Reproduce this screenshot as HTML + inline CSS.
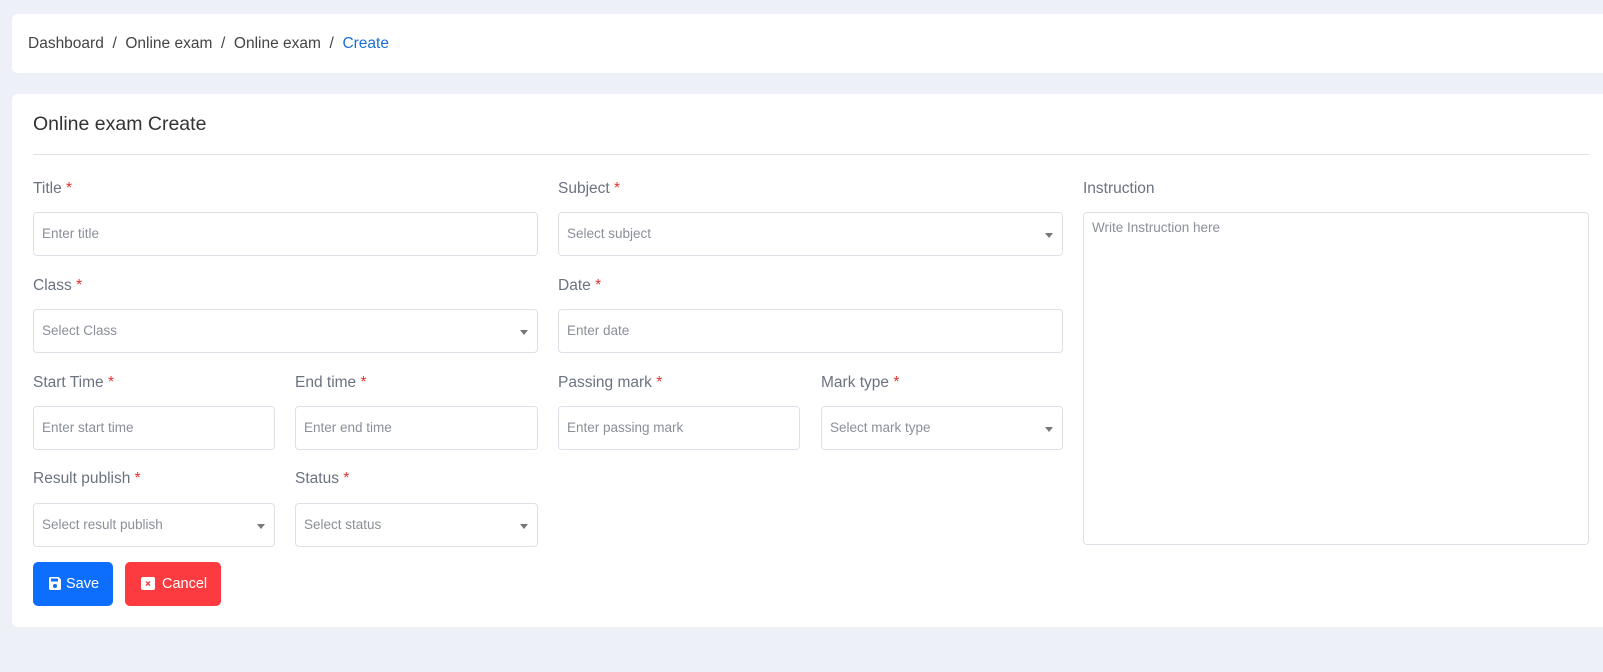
<!DOCTYPE html>
<html><head><style>
body{margin:0;width:1603px;height:672px;background:#edf1f7;font-family:"Liberation Sans",sans-serif;position:relative;overflow:hidden}
.card{position:absolute;background:#fff;border-radius:6px}
.a{position:absolute}
.lbl{position:absolute;font-size:15.5px;color:#6b7280}
.lbl b{color:#e3342f;font-weight:normal}
.in{position:absolute;border:1px solid #dde1e7;border-radius:4px;background:#fff;box-sizing:border-box;height:44px;font-size:13.5px;color:#8a8f98;padding-left:8px;line-height:42px}
.sel:after{content:"";position:absolute;right:9px;top:20px;border-left:4px solid transparent;border-right:4px solid transparent;border-top:5px solid #777}
.btn{position:absolute;height:44px;top:562px;border-radius:5px;color:#fff;font-size:14.5px;line-height:44px}
</style></head><body>
<div class="card" style="left:12px;top:14px;width:1600px;height:59px"></div>
<div class="a" style="left:28px;top:35px;font-size:15.5px;color:#444">Dashboard &nbsp;/&nbsp; Online exam &nbsp;/&nbsp; Online exam &nbsp;/&nbsp; <span style="color:#1a6fd6">Create</span></div>
<div class="card" style="left:12px;top:94px;width:1600px;height:533px"></div>
<div class="a" style="left:33px;top:113px;font-size:19.5px;color:#333">Online exam Create</div>
<div class="a" style="left:33px;top:154px;width:1556px;height:1px;background:#dfe2e6"></div>

<div class="lbl" style="left:33px;top:180px">Title <b>*</b></div>
<div class="in" style="left:33px;top:212px;width:505px">Enter title</div>
<div class="lbl" style="left:558px;top:180px">Subject <b>*</b></div>
<div class="in sel" style="left:558px;top:212px;width:505px">Select subject</div>
<div class="lbl" style="left:1083px;top:180px">Instruction</div>
<div class="in" style="left:1083px;top:212px;width:506px;height:333px;line-height:normal;padding-top:7px">Write Instruction here</div>

<div class="lbl" style="left:33px;top:277px">Class <b>*</b></div>
<div class="in sel" style="left:33px;top:309px;width:505px">Select Class</div>
<div class="lbl" style="left:558px;top:277px">Date <b>*</b></div>
<div class="in" style="left:558px;top:309px;width:505px">Enter date</div>

<div class="lbl" style="left:33px;top:374px">Start Time <b>*</b></div>
<div class="in" style="left:33px;top:406px;width:242px">Enter start time</div>
<div class="lbl" style="left:295px;top:374px">End time <b>*</b></div>
<div class="in" style="left:295px;top:406px;width:243px">Enter end time</div>
<div class="lbl" style="left:558px;top:374px">Passing mark <b>*</b></div>
<div class="in" style="left:558px;top:406px;width:242px">Enter passing mark</div>
<div class="lbl" style="left:821px;top:374px">Mark type <b>*</b></div>
<div class="in sel" style="left:821px;top:406px;width:242px">Select mark type</div>

<div class="lbl" style="left:33px;top:470px">Result publish <b>*</b></div>
<div class="in sel" style="left:33px;top:503px;width:242px">Select result publish</div>
<div class="lbl" style="left:295px;top:470px">Status <b>*</b></div>
<div class="in sel" style="left:295px;top:503px;width:243px">Select status</div>

<div class="btn" style="left:33px;width:80px;background:#0d6efd"><svg class="a" style="left:16px;top:15px" width="12" height="13" viewBox="0 0 12 13"><path d="M0 1.5Q0 0 1.5 0H9.5L12 2.5V11.5Q12 13 10.5 13H1.5Q0 13 0 11.5Z" fill="#fff"/><rect x="2" y="1.5" width="7" height="3" fill="#0d6efd"/><circle cx="6" cy="9" r="2" fill="#0d6efd"/></svg><span class="a" style="left:33px">Save</span></div>
<div class="btn" style="left:125px;width:96px;background:#fb3b3f"><svg class="a" style="left:16px;top:15px" width="14" height="13"><rect width="14" height="13" rx="2" fill="#fff"/><path d="M5 4.5L9 8.5M9 4.5L5 8.5" stroke="#fb3b3f" stroke-width="1.3"/></svg><span class="a" style="left:37px">Cancel</span></div>
</body></html>
